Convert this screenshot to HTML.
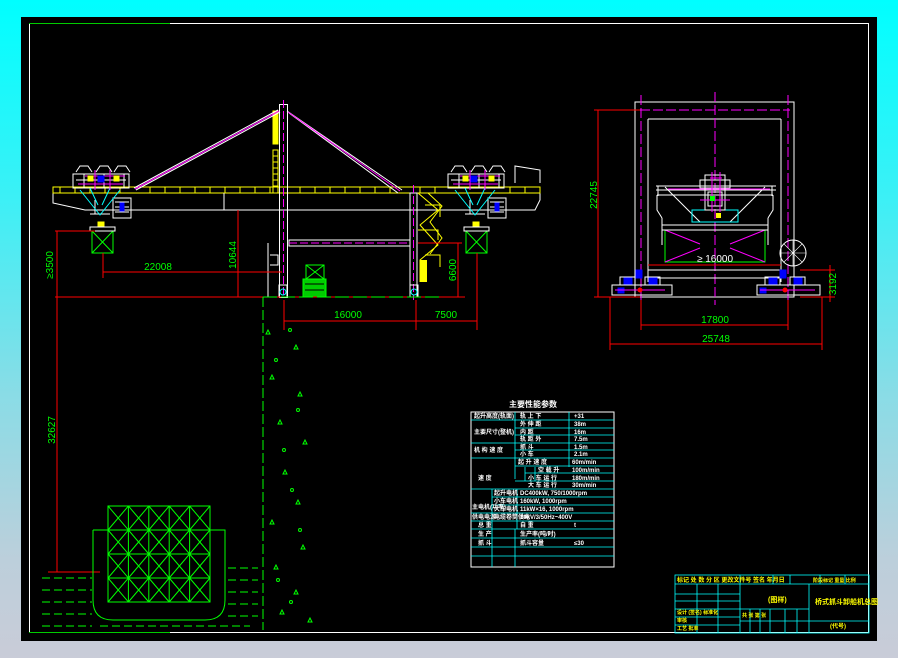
<!DOCTYPE html>
<html><head><meta charset="utf-8"><style>
html,body{margin:0;padding:0;width:898px;height:658px;overflow:hidden;background:linear-gradient(#00ffff 0%,#3cf0f6 30%,#8adce6 60%,#bccfdb 85%,#c9ccd8 100%);}
svg{position:absolute;left:0;top:0}
text{font-family:"Liberation Sans","Noto Sans CJK SC",sans-serif;}
</style></head><body>
<svg width="898" height="658" viewBox="0 0 898 658">
<rect x="21" y="17" width="856" height="624" fill="#000"/>
<rect x="29.5" y="23.5" width="839" height="609" fill="none" stroke="#fff" stroke-width="1"/>
<line x1="29" y1="23.5" x2="170" y2="23.5" stroke="#0c0" stroke-width="1"/>
<line x1="29" y1="632.5" x2="170" y2="632.5" stroke="#0c0" stroke-width="1"/>

<!-- LEFT DRAWING -->
<g fill="none" stroke-width="1">
<path d="M53 193 L53 203 L85 210 L535 210 L540 200 L540 193" stroke="#fff"/>
<rect x="53" y="187" width="487" height="6" stroke="#ff0"/>
<path d="M60 187v6M75 187v6M90 187v6M105 187v6M120 187v6M150 187v6M165 187v6M180 187v6M195 187v6M210 187v6M225 187v6M240 187v6M255 187v6M270 187v6M300 187v6M315 187v6M330 187v6M345 187v6M360 187v6M375 187v6M390 187v6M420 187v6M435 187v6M510 187v6M525 187v6" stroke="#ff0"/>
<line x1="224" y1="193" x2="224" y2="210" stroke="#fff"/>
<path d="M515 183 V166 L540 170 V183" stroke="#fff"/>
<rect x="279.5" y="104.5" width="8" height="193" stroke="#fff"/>
<line x1="283.5" y1="100" x2="283.5" y2="297" stroke="#f0f" stroke-dasharray="8 3"/>
<rect x="273" y="111" width="5" height="33" fill="#ff0" stroke="#ff0"/>
<path d="M273 150 h5 v43 h-5z M273 156h5M273 162h5M273 168h5M273 174h5M273 180h5M273 186h5" stroke="#ff0"/>
<path d="M280 112 L136 190 M278 110 L134 188" stroke="#fff"/>
<path d="M279 111 L135 189" stroke="#f0f"/>
<path d="M287 111 L402 190 M289 113 L398 193" stroke="#fff"/>
<path d="M288 112 L400 191" stroke="#f0f"/>
<rect x="410" y="193" width="7" height="104" stroke="#fff"/>
<line x1="413.5" y1="185" x2="413.5" y2="300" stroke="#f0f" stroke-dasharray="8 3"/>
<rect x="289" y="240" width="121" height="6" stroke="#fff"/>
<line x1="289" y1="243" x2="410" y2="243" stroke="#f0f" stroke-dasharray="8 3"/>
<path d="M418 193 L438 210 L420 225 L438 245 L420 260 L420 282 M425 205 h15 v12 M418 230 h20 v10 M425 255 h15 v12 M428 193 L442 206 L430 222 L442 238 L430 254" stroke="#ff0"/>
<rect x="420" y="260" width="7" height="22" fill="#ff0"/>
<path d="M268 243 V297 M270 255 h8 v10 h-8" stroke="#fff"/>
<g stroke="#fff">
<rect x="73" y="174" width="56" height="14"/><rect x="113" y="198" width="18" height="20"/>
<path d="M76 172 l4-6 h8 l4 6 M96 172 l4-6 h8 l4 6 M114 172 l4-6 h8 l4 6 M95 200 v14 M90 214 h20 M115 202h14M115 207h14M115 212h14M76 180h50M84 174v14M104 174v14M124 174v14"/>
<rect x="448" y="174" width="56" height="14"/><rect x="488" y="198" width="18" height="20"/>
<path d="M451 172 l4-6 h8 l4 6 M471 172 l4-6 h8 l4 6 M489 172 l4-6 h8 l4 6 M470 200 v14 M465 214 h20 M490 202h14M490 207h14M490 212h14M451 180h50M459 174v14M479 174v14M499 174v14"/>
</g>
<path d="M80 190 L100 215 L120 190 M455 190 L475 215 L495 190 M90 188 L98 205 M110 188 L102 205 M465 188 L473 205 M485 188 L477 205" stroke="#0ff"/>
<path d="M85 176 h40 M460 176 h40 M95 170 v20 M110 170 v20 M470 170 v20 M485 170 v20 M78 184h45M453 184h45" stroke="#f0f"/>
<path d="M98 176 h6v6h-6z M471 176 h6v6h-6z M120 203h4v8h-4z M495 203h4v8h-4z" fill="#00f" stroke="#00f"/>
<path d="M88 176h5v5h-5z M114 176h5v5h-5z M463 176h5v5h-5z M489 176h5v5h-5z M98 222h6v4h-6z M473 222h6v4h-6z" fill="#ff0" stroke="#ff0"/>
<rect x="92" y="231" width="21" height="22" stroke="#0f0"/><path d="M92 231 L113 253 M113 231 L92 253" stroke="#0f0"/>
<rect x="466" y="231" width="21" height="22" stroke="#0f0"/><path d="M466 231 L487 253 M487 231 L466 253" stroke="#0f0"/>
<rect x="90" y="227" width="25" height="4" stroke="#fff"/><rect x="464" y="227" width="25" height="4" stroke="#fff"/>
<rect x="306" y="265" width="18" height="14" stroke="#0f0"/><path d="M306 265 L324 279 M324 265 L306 279" stroke="#0f0"/>
<rect x="303" y="279" width="23" height="18" fill="#0c0" stroke="#0f0"/>
<path d="M305 284 h19 M305 290 h19" stroke="#000"/>
<path d="M279 285 h8 v12 h-8z M410 285 h8 v12 h-8z" stroke="#fff"/>
<circle cx="283" cy="292" r="3" stroke="#0ff"/><circle cx="414" cy="292" r="3" stroke="#0ff"/>
</g>
<g stroke="#f00" fill="none" stroke-width="1">
<line x1="55" y1="297" x2="465" y2="297"/>
<line x1="57" y1="231" x2="57" y2="572"/>
<line x1="55" y1="231" x2="95" y2="231"/>
<line x1="103" y1="253" x2="103" y2="278"/>
<line x1="103" y1="272" x2="282" y2="272"/>
<line x1="238" y1="210" x2="238" y2="297"/>
<line x1="418" y1="243" x2="462" y2="243"/>
<line x1="458" y1="243" x2="458" y2="297"/>
<line x1="284" y1="300" x2="284" y2="330"/>
<line x1="416" y1="300" x2="416" y2="330"/>
<line x1="477" y1="253" x2="477" y2="330"/>
<line x1="284" y1="321" x2="477" y2="321"/>
<line x1="48" y1="572" x2="100" y2="572"/>
</g>
<g fill="#0f0" font-size="10">
<text x="158" y="270" text-anchor="middle">22008</text>
<text x="348" y="318" text-anchor="middle">16000</text>
<text x="446" y="318" text-anchor="middle">7500</text>
<text transform="translate(53,265) rotate(-90)" text-anchor="middle">≥3500</text>
<text transform="translate(236,255) rotate(-90)" text-anchor="middle">10644</text>
<text transform="translate(456,270) rotate(-90)" text-anchor="middle">6600</text>
<text transform="translate(55,430) rotate(-90)" text-anchor="middle">32627</text>
</g>
<g stroke="#0f0" fill="none">
<line x1="263" y1="297" x2="263" y2="630" stroke-dasharray="10 3"/>
<line x1="263" y1="297" x2="440" y2="297" stroke-dasharray="14 4"/>
<path d="M268 330 l-2 4h4z M296 345 l-2 4h4z M272 375 l-2 4h4z M300 392 l-2 4h4z M280 420 l-2 4h4z M305 440 l-2 4h4z M285 470 l-2 4h4z M298 500 l-2 4h4z M272 520 l-2 4h4z M303 545 l-2 4h4z M276 565 l-2 4h4z M296 590 l-2 4h4z M282 610 l-2 4h4z M310 618 l-2 4h4z"/>
<circle cx="290" cy="330" r="1.5"/><circle cx="276" cy="360" r="1.5"/><circle cx="298" cy="410" r="1.5"/><circle cx="284" cy="450" r="1.5"/><circle cx="292" cy="490" r="1.5"/><circle cx="300" cy="530" r="1.5"/><circle cx="278" cy="580" r="1.5"/><circle cx="291" cy="602" r="1.5"/>
<path d="M93 530 H108 M210 530 H225 V600 Q225 620 205 620 H113 Q93 620 93 600 V530"/>
<rect x="108" y="506" width="102" height="96"/>
<path d="M128.4 506v96M148.8 506v96M169.2 506v96M189.6 506v96M108 530h102M108 554h102M108 578h102"/>
<path d="M108 506 L128.4 530 M128.4 506 L108 530 M128.4 506 L148.8 530 M148.8 506 L128.4 530 M148.8 506 L169.2 530 M169.2 506 L148.8 530 M169.2 506 L189.6 530 M189.6 506 L169.2 530 M189.6 506 L210 530 M210 506 L189.6 530
M108 530 L128.4 554 M128.4 530 L108 554 M128.4 530 L148.8 554 M148.8 530 L128.4 554 M148.8 530 L169.2 554 M169.2 530 L148.8 554 M169.2 530 L189.6 554 M189.6 530 L169.2 554 M189.6 530 L210 554 M210 530 L189.6 554
M108 554 L128.4 578 M128.4 554 L108 578 M128.4 554 L148.8 578 M148.8 554 L128.4 578 M148.8 554 L169.2 578 M169.2 554 L148.8 578 M169.2 554 L189.6 578 M189.6 554 L169.2 578 M189.6 554 L210 578 M210 554 L189.6 578
M108 578 L128.4 602 M128.4 578 L108 602 M128.4 578 L148.8 602 M148.8 578 L128.4 602 M148.8 578 L169.2 602 M169.2 578 L148.8 602 M169.2 578 L189.6 602 M189.6 578 L169.2 602 M189.6 578 L210 602 M210 578 L189.6 602"/>
<path d="M42 578h50M42 590h50M42 602h50M42 614h50M42 626h50M228 568h30M228 580h30M228 592h30M228 604h30M228 616h30M100 626h150" stroke-dasharray="8 4"/>
</g>

<!-- RIGHT DRAWING -->
<g fill="none" stroke-width="1">
<rect x="635" y="102" width="159" height="195" stroke="#fff"/>
<path d="M648 119 V282 M781 119 V282 M648 119 H781" stroke="#fff"/>
<path d="M640 110 H790" stroke="#f0f" stroke-dasharray="10 3"/>
<path d="M641 95 V300 M788 95 V300" stroke="#f0f" stroke-dasharray="10 3"/>
<path d="M715 92 V305" stroke="#f0f" stroke-dasharray="10 3"/>
<path d="M657 195 H773 M657 195 v15 l5 8 M773 195 v15 l-5 8 M662 218 V245 M768 218 V245" stroke="#fff"/>
<path d="M656 186 H776 M656 190 H776 M658 186 v10 M772 186 v10" stroke="#fff"/>
<path d="M665 187 L700 222 M765 187 L730 222" stroke="#fff"/>
<path d="M668 189 H770" stroke="#f0f"/>
<rect x="692" y="210" width="46" height="12" stroke="#0ff"/>
<path d="M705 175 h20 v35 h-20z M700 180h30v8h-30z M708 192h14v14h-14z" stroke="#fff"/>
<path d="M710 178 h12 M700 200 h30 M712 172v40M720 172v40" stroke="#f0f"/>
<rect x="710" y="196" width="5" height="5" fill="#0f0"/>
<rect x="716" y="213" width="5" height="5" fill="#ff0"/>
<rect x="665" y="230" width="100" height="32" stroke="#0f0"/>
<path d="M665 230 L700 244 M765 230 L730 244 M665 262 L700 248 M765 262 L730 248" stroke="#f0f"/>
<rect x="662" y="225" width="106" height="5" stroke="#fff"/>
<path d="M648 265 H781 M648 270 H781 M648 278 H781" stroke="#fff"/>
<circle cx="793" cy="253" r="13" stroke="#fff"/>
<path d="M780 253h26M793 240v26M784 244l18 18M802 244l-18 18" stroke="#fff" stroke-width="0.6"/>
<g stroke="#fff"><rect x="612" y="285" width="60" height="10"/><rect x="757" y="285" width="63" height="10"/>
<path d="M620 285 v-8 h15 v8 M645 285 v-8 h15 v8 M765 285 v-8 h15 v8 M790 285 v-8 h15 v8 M616 290h4M630 290h4M648 290h4M660 290h4M762 290h4M776 290h4M794 290h4M808 290h4"/></g>
<g fill="#00f" stroke="#00f"><rect x="624" y="278" width="8" height="6"/><rect x="649" y="278" width="8" height="6"/><rect x="769" y="278" width="8" height="6"/><rect x="794" y="278" width="8" height="6"/><rect x="636" y="270" width="6" height="8"/><rect x="780" y="270" width="6" height="8"/><rect x="618" y="288" width="6" height="5"/><rect x="760" y="288" width="6" height="5"/></g>
<path d="M615 290h50M760 290h55" stroke="#f0f"/>
<circle cx="640" cy="290" r="2" fill="#f00" stroke="#f00"/><circle cx="785" cy="290" r="2" fill="#f00" stroke="#f00"/>
</g>
<g stroke="#f00" fill="none">
<line x1="594" y1="110" x2="640" y2="110"/>
<line x1="598" y1="110" x2="598" y2="297"/>
<line x1="594" y1="297" x2="640" y2="297"/>
<line x1="648" y1="265" x2="781" y2="265"/>
<line x1="610" y1="297" x2="610" y2="350"/>
<line x1="641" y1="300" x2="641" y2="330"/>
<line x1="788" y1="300" x2="788" y2="330"/>
<line x1="822" y1="297" x2="822" y2="350"/>
<line x1="641" y1="325" x2="788" y2="325"/>
<line x1="610" y1="344" x2="822" y2="344"/>
<line x1="800" y1="270" x2="835" y2="270"/>
<line x1="800" y1="297" x2="835" y2="297"/>
<line x1="830" y1="265" x2="830" y2="302"/>
</g>
<g fill="#0f0" font-size="10">
<text transform="translate(597,195) rotate(-90)" text-anchor="middle">22745</text>
<text x="715" y="262" text-anchor="middle" fill="#fff">≥ 16000</text>
<text x="715" y="323" text-anchor="middle">17800</text>
<text x="716" y="342" text-anchor="middle">25748</text>
<text transform="translate(836,284) rotate(-90)" text-anchor="middle">3192</text>
</g>

<!-- TABLE -->
<text x="533" y="407" fill="#fff" font-size="8" text-anchor="middle" font-weight="bold">主要性能参数</text>
<g stroke="#0ff" fill="none" stroke-width="0.8">
<rect x="471" y="412" width="143" height="155" stroke="#fff" stroke-width="1"/>
<path d="M515 412V467M515 467V479 M569 412V467 M525 467V481 M535 467V481 M471 420H614 M515 428H614 M515 435H614 M471 443H614 M515 450H614 M471 458H614 M515 466H614 M525 473H614 M515 481H614 M471 489H614 M492 489V529 M517 489V529 M492 497H614 M492 505H614 M471 513H614 M471 521H614 M471 529H614 M471 538H614 M471 547H614 M471 556H614 M492 529V567 M515 529V567"/>
</g>
<g fill="#fff" font-size="6" font-weight="bold">
<text x="474" y="418">起升高度(轨面)</text><text x="520" y="418">轨 上 下</text><text x="574" y="418">+31</text>
<text x="520" y="426">外 伸 距</text><text x="574" y="426">38m</text>
<text x="474" y="434">主要尺寸(整机)</text><text x="520" y="434">内 距</text><text x="574" y="434">16m</text>
<text x="520" y="441">轨 距 外</text><text x="574" y="441">7.5m</text>
<text x="474" y="452">机 构 速 度</text><text x="520" y="449">抓 斗</text><text x="574" y="449">1.5m</text>
<text x="520" y="456">小 车</text><text x="574" y="456">2.1m</text>
<text x="518" y="464">起 升 速 度</text><text x="572" y="464">60m/min</text>
<text x="538" y="472">空 载 升</text><text x="572" y="472">100m/min</text>
<text x="478" y="480">速 度</text><text x="528" y="480">小 车 运 行</text><text x="572" y="480">180m/min</text>
<text x="528" y="487">大 车 运 行</text><text x="572" y="487">30m/min</text>
<text x="494" y="495">起升电机</text><text x="520" y="495">DC400kW, 750/1000rpm</text>
<text x="472" y="509">主电机(功率)</text><text x="494" y="503">小车电机</text><text x="520" y="503">160kW, 1000rpm</text>
<text x="494" y="511">大车电机</text><text x="520" y="511">11kW×16, 1000rpm</text>
<text x="472" y="519">供电电源</text><text x="494" y="519">电缆卷筒供电</text><text x="520" y="519">10kV/3/50Hz~400V</text>
<text x="478" y="527">总 重</text><text x="520" y="527">自 重</text><text x="574" y="527">t</text>
<text x="478" y="536">生 产</text><text x="520" y="536">生产率(吨/时)</text>
<text x="478" y="545">抓 斗</text><text x="520" y="545">抓斗容量</text><text x="574" y="545">≤30</text>
</g>

<!-- TITLE BLOCK -->
<g stroke="#0ff" fill="none" stroke-width="0.8">
<rect x="675" y="575" width="194" height="58"/>
<path d="M675 584H869 M675 594H740 M675 601H740 M675 609H740 M675 617H740 M675 625H740 M697 584V633 M718 584V633 M740 575V633 M740 609H809 M740 621H809 M809 584V633 M809 621H869 M773 575V584 M790 575V584 M820 575V584 M845 575V584 M750 609V633 M760 609V633 M770 609V633 M785 609V633 M797 609V633"/>
</g>
<g fill="#ff0" font-size="6" font-weight="bold">
<text x="677" y="582">标记 处 数 分 区 更改文件号 签名 年月日</text>
<text x="813" y="582" font-size="5">阶段标记 重量 比例</text>
<text x="768" y="602" font-size="7">(图样)</text>
<text x="815" y="604" font-size="7">桥式抓斗卸船机总图</text>
<text x="830" y="628">(代号)</text>
<text x="677" y="614" font-size="5">设计 (签名) 标准化</text>
<text x="677" y="622" font-size="5">审核</text><text x="677" y="630" font-size="5">工艺 批准</text>
<text x="742" y="617" font-size="5">共 张 第 张</text>
</g>
</svg>
</body></html>
